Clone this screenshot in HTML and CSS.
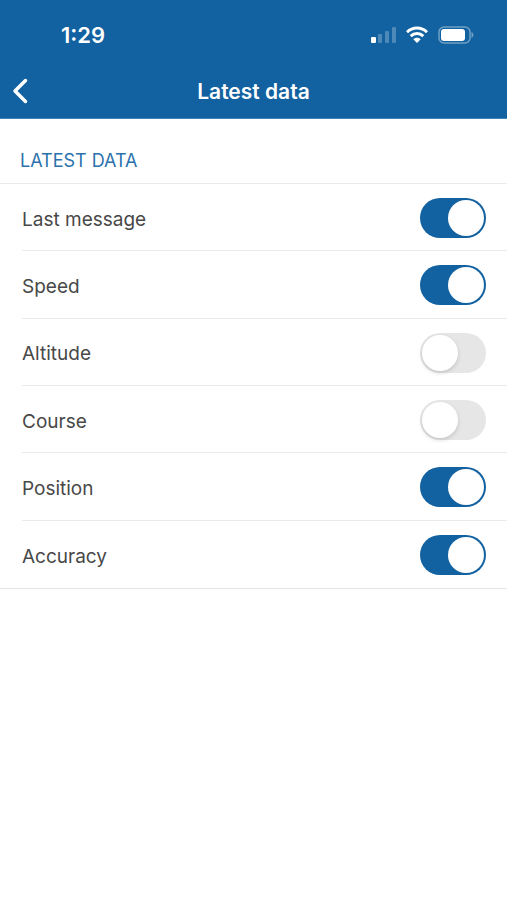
FILE: index.html
```html
<!DOCTYPE html>
<html lang="en">
<head>
    <meta charset="UTF-8">
    <meta name="viewport" content="width=device-width, initial-scale=1.0">
    <title>Latest data</title>
    <link rel="stylesheet" href="styles.css">
</head>
<body>
    <header>
        <div class="status-bar">
            <span class="time">1:29</span>
            <div class="status-icons">
                <svg width="26" height="18" viewBox="0 0 26 18" fill="#fff">
                    <rect x="1" y="11" width="5" height="6" rx="1"/>
                    <g opacity="0.25">
                        <rect x="8" y="8" width="4" height="9" rx="1"/>
                        <rect x="15" y="5" width="4" height="12" rx="1"/>
                        <rect x="22" y="1" width="4" height="16" rx="1"/>
                    </g>
                </svg>
                <svg width="22" height="18" viewBox="0 0 22 18" fill="none" stroke="#fff" stroke-width="3">
                    <path d="M1 6.3C6.500 0.700 15.500 0.700 21 6.300"/>
                    <path d="M4.700 10.200C8.300 6.700 13.700 6.700 17.300 10.200"/>
                    <path d="M7.300 13.200C9.400 11.200 12.600 11.200 14.700 13.200L11 17Z" fill="#fff" stroke="none"/>
                </svg>
                <svg width="36" height="18" viewBox="0 0 36 18">
                    <rect x="1" y="1" width="31" height="16" rx="5" fill="none" stroke="#fff" stroke-opacity="0.4" stroke-width="1.500"/>
                    <rect x="3" y="3" width="24" height="12" rx="3" fill="#fff"/>
                    <path d="M33.500 6C36 7 36 11 33.500 12Z" fill="#fff" fill-opacity="0.4"/>
                </svg>
            </div>
        </div>
        <div class="nav-bar">
            <button class="back" type="button" aria-label="Back">
                <svg width="16" height="26" viewBox="0 0 16 26" fill="none" stroke="#fff" stroke-width="3.500" stroke-linecap="round" stroke-linejoin="round">
                    <path d="M13.500 2.500L3 13L13.500 23.500"/>
                </svg>
            </button>
            <h1>Latest data</h1>
        </div>
    </header>

    <main>
        <h2>Latest data</h2>
        <div class="settings">
            <label class="row">
                <span>Last message</span>
                <input type="checkbox" class="switch" checked>
            </label>
            <label class="row">
                <span>Speed</span>
                <input type="checkbox" class="switch" checked>
            </label>
            <label class="row">
                <span>Altitude</span>
                <input type="checkbox" class="switch">
            </label>
            <label class="row">
                <span>Course</span>
                <input type="checkbox" class="switch">
            </label>
            <label class="row">
                <span>Position</span>
                <input type="checkbox" class="switch" checked>
            </label>
            <label class="row">
                <span>Accuracy</span>
                <input type="checkbox" class="switch" checked>
            </label>
        </div>
    </main>
</body>
</html>
```

FILE: styles.css
```css
* {
    box-sizing: border-box;
}
body {
    font-family: Inter, 'Liberation Sans', sans-serif;
    font-size: 19px;
    background-color: #fff;
    color: #484848;
    margin: 0;
}
header {
    background-color: #1261a0;
    color: #fff;
    border-bottom: 1px solid #4583b5;
}
.status-bar {
    display: flex;
    justify-content: space-between;
    align-items: center;
    padding: 22px 33px 0 61px;
    height: 48px;
}
.time {
    font-size: 22px;
    font-weight: 600;
}
.status-icons {
    display: flex;
    align-items: center;
    gap: 10px;
}
.status-icons svg {
    display: block;
}
.nav-bar {
    display: grid;
    grid-template-columns: 48px 1fr 48px;
    align-items: center;
    height: 70px;
    padding-top: 16px;
}
.back {
    display: flex;
    padding: 0 12px;
    border: none;
    background: none;
    cursor: pointer;
}
h1 {
    margin: 0;
    font-size: 21px;
    font-weight: 600;
    text-align: center;
}
h2 {
    margin: 0;
    padding: 31px 20px 11px;
    font-size: 18px;
    font-weight: 400;
    line-height: 22px;
    text-transform: uppercase;
    color: #2b72ac;
}
.settings {
    display: grid;
    grid-auto-rows: 1fr;
    min-height: 406px;
    border-top: 1px solid #ebebeb;
    border-bottom: 1px solid #e4e4e4;
}
.row {
    display: flex;
    justify-content: space-between;
    align-items: center;
    margin-left: 22px;
    padding: 2px 21px 0 0;
    border-bottom: 1px solid #ebebeb;
    cursor: pointer;
}
.row span {
    padding-top: 2px;
}
.row:last-child {
    border-bottom: none;
}
.switch {
    appearance: none;
    display: flex;
    align-items: center;
    width: 66px;
    height: 40px;
    margin: 0;
    padding: 2px;
    border-radius: 20px;
    background-color: #e6e6e6;
    cursor: pointer;
}
.switch::before {
    content: '';
    width: 36px;
    height: 36px;
    border-radius: 50%;
    background-color: #fff;
    box-shadow: 0 2px 4px rgba(0, 0, 0, 0.15);
}
.switch:checked {
    justify-content: flex-end;
    background-color: #1261a0;
}
.switch:checked::before {
    box-shadow: none;
}
```
